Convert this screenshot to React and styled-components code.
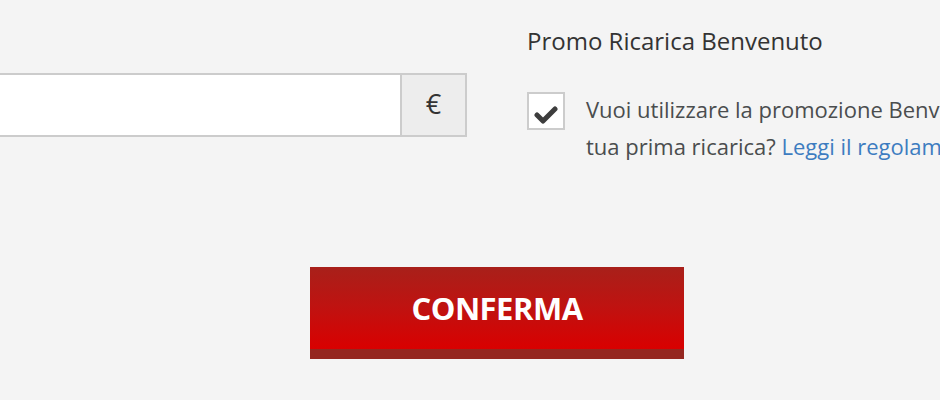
import React from "react";
import styled, { createGlobalStyle } from "styled-components";

const Global = createGlobalStyle`
  html, body { margin: 0; padding: 0; background: #f4f4f4; }
  body { font-family: "Open Sans", "Liberation Sans", sans-serif; overflow: hidden; }
`;

const Page = styled.div`
  width: 940px;
  height: 400px;
  overflow: hidden;
  background: #f4f4f4;
`;

const TopRow = styled.div`
  display: flex;
  gap: 60px;
  margin-left: -40px;
`;

const LeftCol = styled.div`
  width: 507px;
  flex: none;
  padding-top: 73px;
`;

const InputGroup = styled.div`
  display: flex;
  height: 64px;
`;

const AmountInput = styled.div`
  flex: 1;
  background: #ffffff;
  border: 2px solid #cccccc;
  border-right: 0;
`;

const Addon = styled.div`
  width: 67px;
  box-sizing: border-box;
  border: 2px solid #cccccc;
  background: #ededed;
  display: flex;
  align-items: center;
  justify-content: center;
  color: #333333;
  font-size: 27px;
  padding-bottom: 3px;
`;

const RightCol = styled.div`
  flex: none;
  width: 560px;
  padding-top: 25px;
`;

const Title = styled.h2`
  margin: 0;
  font-size: 24px;
  line-height: 32px;
  font-weight: 400;
  color: #333333;
  white-space: nowrap;
`;

const OptionRow = styled.label`
  display: flex;
  align-items: flex-start;
  gap: 21px;
  margin-top: 34px;
`;

const Box = styled.span`
  flex: none;
  width: 38px;
  height: 38px;
  box-sizing: border-box;
  margin-top: 1px;
  border: 2px solid #cccccc;
  background: #ffffff;
  display: flex;
  align-items: center;
  justify-content: center;
  padding-top: 7px;
`;

const OptionText = styled.span`
  font-size: 22px;
  line-height: 37px;
  color: #4a4d4e;
  white-space: nowrap;
`;

const Link = styled.a`
  color: #3d7cc0;
  text-decoration: none;
`;

const ButtonRow = styled.div`
  display: flex;
  padding-left: 310px;
  margin-top: 102px;
`;

const Confirm = styled.button`
  width: 374px;
  height: 92px;
  box-sizing: border-box;
  border: 0;
  border-bottom: 10px solid #952720;
  background: linear-gradient(to bottom, #a8201a 0%, #c01210 50%, #d90000 100%);
  color: #ffffff;
  font-family: "Open Sans", "Liberation Sans", sans-serif;
  font-weight: 700;
  font-size: 31px;
  letter-spacing: -0.5px;
  padding: 0;
  cursor: pointer;
`;

export default function App() {
  return (
    <Page>
      <Global />
      <TopRow>
        <LeftCol>
          <InputGroup>
            <AmountInput />
            <Addon>€</Addon>
          </InputGroup>
        </LeftCol>
        <RightCol>
          <Title>Promo Ricarica Benvenuto</Title>
          <OptionRow>
            <Box>
              <svg width="24" height="20" viewBox="0 0 24 20">
                <polyline
                  points="3,10 9,16 21,4"
                  fill="none"
                  stroke="#3d3d3d"
                  strokeWidth="5"
                  strokeLinecap="round"
                  strokeLinejoin="round"
                />
              </svg>
            </Box>
            <OptionText>
              Vuoi utilizzare la promozione Benvenuto sulla
              <br />
              tua prima ricarica? <Link href="#">Leggi il regolamento</Link>
            </OptionText>
          </OptionRow>
        </RightCol>
      </TopRow>
      <ButtonRow>
        <Confirm>CONFERMA</Confirm>
      </ButtonRow>
    </Page>
  );
}
